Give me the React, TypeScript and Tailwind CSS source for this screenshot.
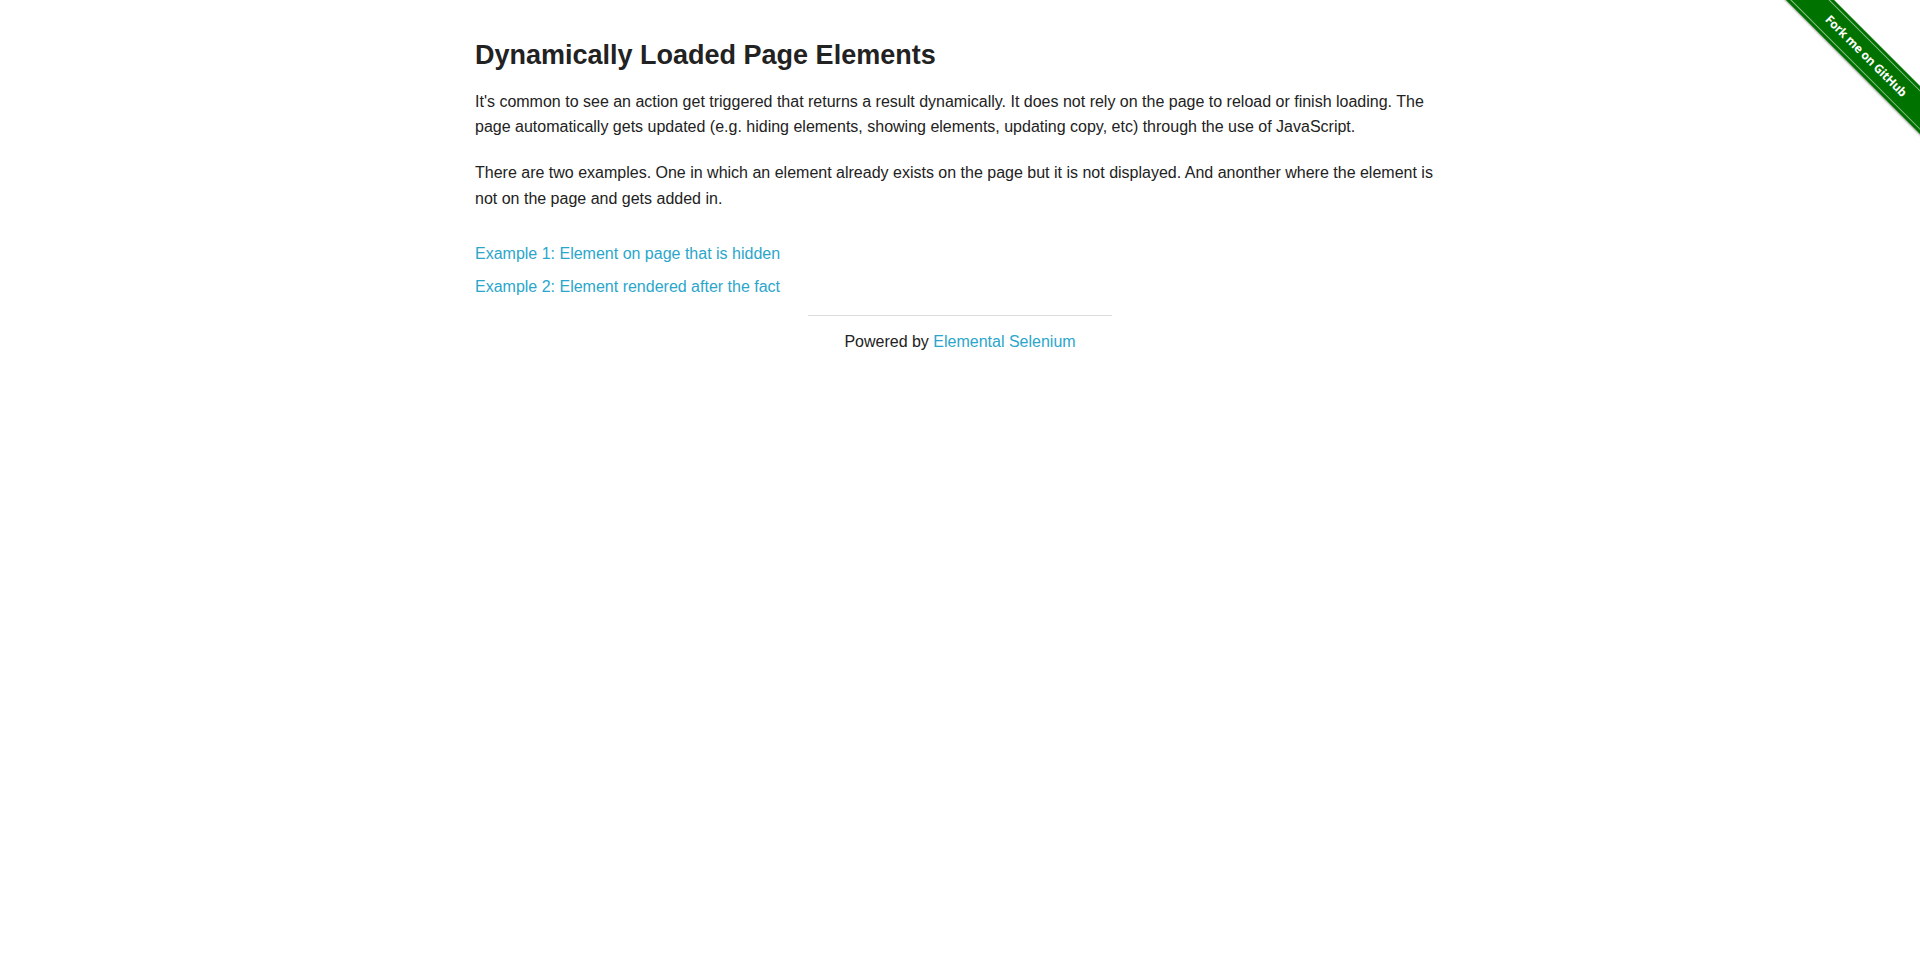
import React from "react";

function ForkRibbon() {
  return (
    <a
      href="#"
      className="absolute top-0 right-0 w-[149px] h-[149px] overflow-hidden"
    >
      <div className="absolute left-[-15px] top-[39px] w-[220px] h-[34px] rotate-45 bg-[#007200] shadow-[0_1px_2px_rgba(0,0,0,0.35)] flex items-center">
        <div className="w-full h-[28px] border-y border-[#8cc08c] flex items-center justify-center">
          <span className="font-['Open_Sans','DejaVu_Sans',sans-serif] text-[12px] font-bold text-white leading-none tracking-[-0.2px]">
            Fork me on GitHub
          </span>
        </div>
      </div>
    </a>
  );
}

export default function App() {
  return (
    <div className="relative min-h-screen bg-white font-['Liberation_Sans',Arial,sans-serif] text-[#222]">
      <ForkRibbon />

      <div className="mx-auto max-w-[1000px] px-[15px]">
        <div className="pt-[37px]">
          <h3 className="text-[27px] leading-[37.8px] font-bold">
            Dynamically Loaded Page Elements
          </h3>
          <p className="mt-[14px] text-[16px] leading-[25.6px]">
            It's common to see an action get triggered that returns a result dynamically. It does not rely on the page to reload or finish loading. The page automatically gets updated (e.g. hiding elements, showing elements, updating copy, etc) through the use of JavaScript.
          </p>
          <p className="mt-[20px] text-[16px] leading-[25.6px]">
            There are two examples. One in which an element already exists on the page but it is not displayed. And anonther where the element is not on the page and gets added in.
          </p>

          <div className="mt-[31px] flex flex-col items-start gap-[9px] text-[16px] leading-[24px]">
            <a href="#" className="text-[#2ba6cb]">
              Example 1: Element on page that is hidden
            </a>
            <a href="#" className="text-[#2ba6cb]">
              Example 2: Element rendered after the fact
            </a>
          </div>
        </div>

        <div className="mx-auto w-[304px]">
          <hr className="mt-[16px] border-t border-[#ddd]" />
          <div className="mt-[14px] text-center text-[16px] leading-[24px]">
            Powered by{" "}
            <a href="#" className="text-[#2ba6cb]">
              Elemental Selenium
            </a>
          </div>
        </div>
      </div>
    </div>
  );
}
